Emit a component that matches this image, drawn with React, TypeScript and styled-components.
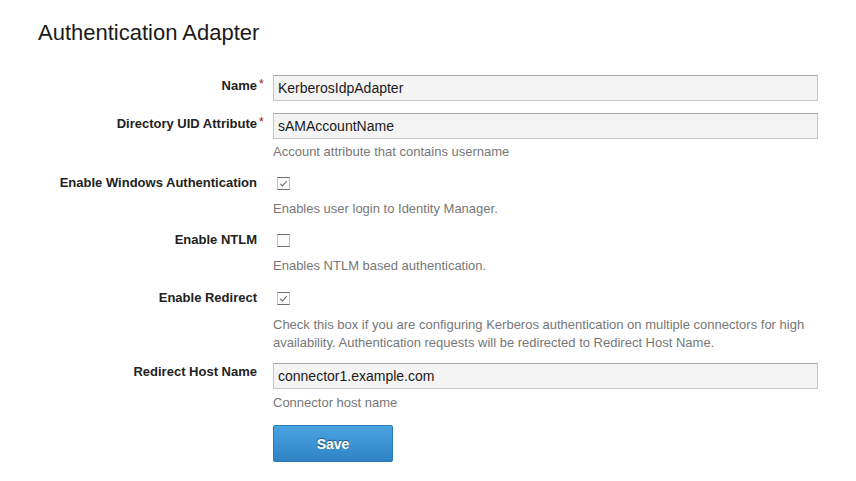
import React from "react";
import styled, { createGlobalStyle } from "styled-components";

const Global = createGlobalStyle`
  html, body { margin: 0; padding: 0; background: #ffffff; }
  body { font-family: "Liberation Sans", Arial, sans-serif; color: #222; }
`;

const Page = styled.div`
  width: 856px;
  padding-top: 20px;
  box-sizing: border-box;
`;

const Title = styled.h1`
  margin: 0 0 29px 38px;
  font-size: 22px;
  line-height: 26px;
  font-weight: normal;
  color: #1a1a1a;
`;

const Form = styled.form`
  display: flex;
  flex-direction: column;
  margin: 0;
`;

const Row = styled.div<{ $gap: number }>`
  display: grid;
  grid-template-columns: 257px 545px;
  column-gap: 16px;
  margin-bottom: ${(p) => p.$gap}px;
`;

const Label = styled.label<{ $pad: number }>`
  justify-self: end;
  position: relative;
  padding-top: ${(p) => p.$pad}px;
  font-size: 13px;
  line-height: 18px;
  font-weight: bold;
  color: #222;
  white-space: nowrap;
`;

const Req = styled.span`
  position: absolute;
  left: 100%;
  top: 0;
  margin-left: 2px;
  margin-top: 1px;
  font-size: 12px;
  line-height: 16px;
  color: #9b1111;
  font-weight: normal;
`;

const Field = styled.div`
  display: flex;
  flex-direction: column;
  align-items: flex-start;
`;

const TextInput = styled.input`
  box-sizing: border-box;
  width: 545px;
  height: 26px;
  margin: 0;
  padding: 0 4px;
  border: 1px solid #c6c6c6;
  border-top-color: #a8a8a8;
  background: #f4f4f4;
  font-family: "Liberation Sans", Arial, sans-serif;
  font-size: 14px;
  color: #1a1a1a;
  outline: none;
`;

const CheckLine = styled.div`
  height: 22px;
  display: flex;
  align-items: flex-start;
`;

const Box = styled.span`
  box-sizing: border-box;
  width: 13px;
  height: 13px;
  margin: 3px 0 0 4px;
  border-top: 1px solid #6e6e6e;
  border-bottom: 1px solid #6e6e6e;
  border-left: 1px solid #c3c3c3;
  border-right: 1px solid #c3c3c3;
  background: #fbfbfb;
  display: flex;
  align-items: center;
  justify-content: center;
`;

const Help = styled.div<{ $mt: number }>`
  margin-top: ${(p) => p.$mt}px;
  font-size: 13px;
  line-height: 18px;
  color: #777;
  max-width: 545px;
`;

const SaveButton = styled.button`
  box-sizing: border-box;
  width: 120px;
  height: 37px;
  margin: 0;
  border: 1px solid #2b79b8;
  border-radius: 2px;
  background: linear-gradient(#4aa4e0, #2f83c5);
  box-shadow: 0 1px 1px rgba(0, 0, 0, 0.15);
  color: #fff;
  font-family: "Liberation Sans", Arial, sans-serif;
  font-size: 14px;
  font-weight: bold;
  text-shadow: 0 -1px 1px rgba(0, 0, 0, 0.45);
  cursor: pointer;
`;

const Check = ({ checked }: { checked: boolean }) => (
  <Box>
    {checked && (
      <svg width="9" height="9" viewBox="0 0 9 9">
        <path d="M1.2 4.8 L3.4 6.9 L7.8 2" fill="none" stroke="#6a6a6a" strokeWidth="1.1" />
      </svg>
    )}
  </Box>
);

export default function App() {
  return (
    <Page>
      <Global />
      <Title>Authentication Adapter</Title>
      <Form onSubmit={(e) => e.preventDefault()}>
        <Row $gap={12}>
          <Label $pad={2}>
            Name<Req>*</Req>
          </Label>
          <Field>
            <TextInput defaultValue="KerberosIdpAdapter" />
          </Field>
        </Row>
        <Row $gap={13}>
          <Label $pad={2}>
            Directory UID Attribute<Req>*</Req>
          </Label>
          <Field>
            <TextInput defaultValue="sAMAccountName" />
            <Help $mt={4}>Account attribute that contains username</Help>
          </Field>
        </Row>
        <Row $gap={13}>
          <Label $pad={0}>Enable Windows Authentication</Label>
          <Field>
            <CheckLine>
              <Check checked />
            </CheckLine>
            <Help $mt={4}>Enables user login to Identity Manager.</Help>
          </Field>
        </Row>
        <Row $gap={14}>
          <Label $pad={0}>Enable NTLM</Label>
          <Field>
            <CheckLine>
              <Check checked={false} />
            </CheckLine>
            <Help $mt={4}>Enables NTLM based authentication.</Help>
          </Field>
        </Row>
        <Row $gap={11}>
          <Label $pad={0}>Enable Redirect</Label>
          <Field>
            <CheckLine>
              <Check checked />
            </CheckLine>
            <Help $mt={5}>
              Check this box if you are configuring Kerberos authentication on multiple connectors for high
              availability. Authentication requests will be redirected to Redirect Host Name.
            </Help>
          </Field>
        </Row>
        <Row $gap={13}>
          <Label $pad={0}>Redirect Host Name</Label>
          <Field>
            <TextInput defaultValue="connector1.example.com" />
            <Help $mt={5}>Connector host name</Help>
          </Field>
        </Row>
        <Row $gap={0}>
          <span />
          <Field>
            <SaveButton type="submit">Save</SaveButton>
          </Field>
        </Row>
      </Form>
    </Page>
  );
}
